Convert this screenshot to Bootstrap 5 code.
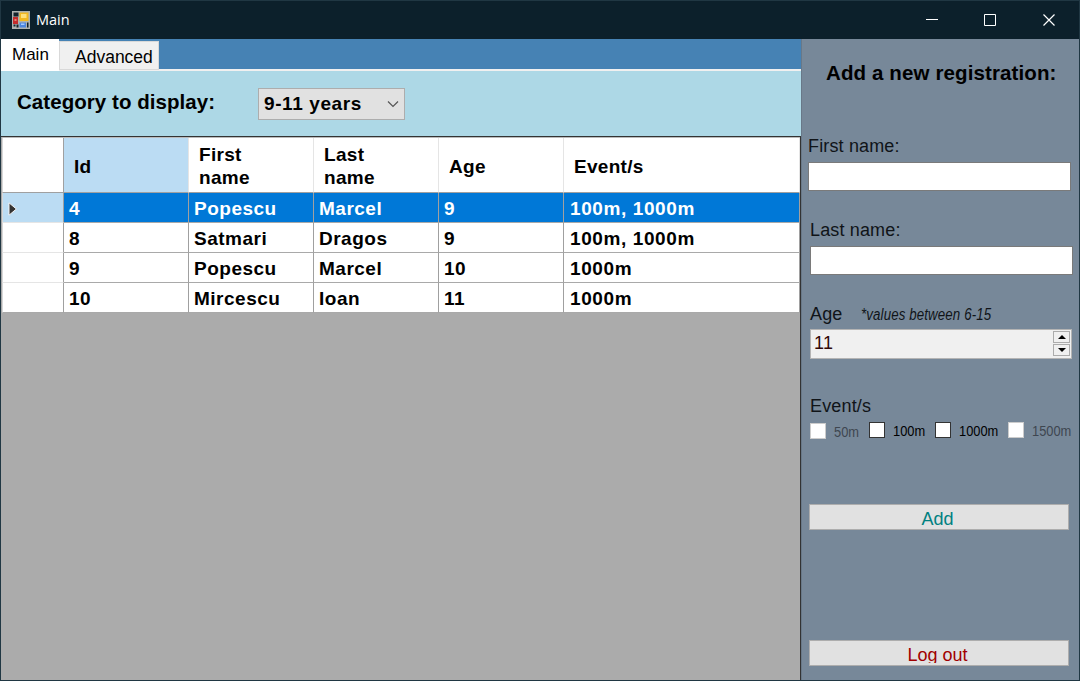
<!DOCTYPE html>
<html lang="en">
<head>
<meta charset="utf-8">
<title>Main</title>
<link href="https://cdn.jsdelivr.net/npm/bootstrap@5.3.0/dist/css/bootstrap.min.css" rel="stylesheet">
<style>
body{font-family:"Liberation Sans",Arial,sans-serif;color:#000;line-height:1.15}
.window{width:1080px;height:681px;border:1px solid #203743;background:#789}
.titlebar{height:38px;background:#0c202b;color:#fff;font:15px "Open Sans","Noto Sans",sans-serif;padding-left:11px}
.titlebar .caption{margin:-2px auto 0 6px;font-size:14.5px}
.winbtn{width:58.5px;position:relative;left:-1px}
.pane{width:800px;background:#ababab}
.tabs{height:32px;background:#4682b4;border-bottom:2px solid #f0f0f0}
.tab-on{width:58px;height:32px;background:#fff;font-size:17px;padding:6px 0 0 11px}
.tab-off{width:100px;height:29px;margin-top:2px;background:#f0f0f0;border:1px solid #d9d9d9;font-size:17.5px;padding:5px 0 0 15px}
.filter{height:65px;background:#add8e6;padding-left:16px}
.filter-label{font-size:20.5px;font-weight:700;letter-spacing:.05px;width:241px;margin-top:-4px}
.combo{width:147px;height:32px;background:#e1e1e1;border:1px solid #adadad;padding:1px 5px 0 5px;font-size:19px;font-weight:700;letter-spacing:.6px}
.gridview{border:solid #333;border-width:1px 1px 0 0;height:544px;padding-left:1px}
.records{table-layout:fixed;width:798px;border-collapse:separate;border-spacing:0;font-size:19px;font-weight:700;letter-spacing:.5px;background:#fff;border-top:1px solid #bbb}
.records th{height:55px;border-right:1px solid #e5e5e5;border-bottom:1px solid #a0a0a0;padding:2px 9px 0 10px;line-height:23px;vertical-align:middle;letter-spacing:.3px}
.records td{height:30px;border-right:1px solid #a0a0a0;border-bottom:1px solid #a9a9a9;padding:2px 0 0 5px;line-height:26px;white-space:nowrap}
.records td:last-child{padding-left:6px;letter-spacing:.6px}
.records tr>:first-child{border-left:1px solid #d8d8d8;border-right-color:#a0a0a0}
.records td:first-child{border-bottom-color:#e5e5e5;padding-left:5px}
.records tr:last-child td:first-child{border-bottom-color:#a9a9a9}
.records .hot,.records .current td:first-child{background:#bbdcf3}
.records .current td{background:#0078d7;color:#fff}
.side{width:278px;border-left:1px solid #687888;padding-left:6px}
.side-title{font-size:20.5px;font-weight:700;letter-spacing:.12px;margin:21px 0 0 18px;height:76px}
.lbl{font-size:18px;height:26px;color:#101418;letter-spacing:.15px}
.field{width:263px;height:29px;background:#fff;border:1px solid #7a7a7a}
.inset{margin-left:2px}
.last-row{margin:29px 0 0 2px}
.age-row{margin:29px 0 0 2px;height:25px}
.spin{width:262px;height:30px;background:#f0f0f0;border:1px solid #b4b4b4;font-size:18px;letter-spacing:.4px;color:#300808;padding:0 1px 0 3px}
.spin-val{padding-top:3px}
.spin-col{gap:1px;padding-top:1px}
.spin-btn{width:17px;height:12px;background:#f0f0f0;border:1px solid #acacac}
.narrow{display:inline-block;transform:scaleX(.83);transform-origin:0 0;white-space:nowrap}
.hint{font-size:16px;font-style:italic;margin:2px 0 0 19px}
.event-row{margin:37px 0 0 2px;height:26px}
.opts{padding-left:2px;height:82px;font-size:15.5px}
.opts label{gap:8px;height:18px;flex:none}
.box{flex:none;width:16px;height:16px;background:#fff;border:1px solid #333}
.off .box{border-color:#ccc}
.off{color:#3e4650}
.o1{width:59px;padding-top:1px}
.o2{width:66px}
.o3{width:73px}
.o4{width:60px}
.act{margin-left:1px;width:260px;height:26px;background:#e1e1e1;border:1px solid #adadad;font-size:18px;line-height:28px;text-align:center;padding-right:3px}
.add{color:#008080}
.out{color:#a00000;margin-top:110px}
.out span{display:block;height:22px;overflow:hidden}
</style>
</head>
<body>
<div class="window d-flex flex-column overflow-hidden">
  <header class="titlebar d-flex align-items-center flex-shrink-0">
    <svg width="18" height="18" viewBox="0 0 18 18"><path fill="#aeb2b0" d="M0 0h18v18H0z"/><path fill="#14232c" d="M1.500 1.500h5v4h-5zM1.500 13.500h2v2h-2zM4.500 13.500h2v3h-2zM15 11.500h1.500v5H15z"/><path fill="#c52b2b" d="M1 6h5v7H1z"/><path fill="#e98276" d="M2.500 8h2v2h-2z"/><path fill="#f3b91e" d="M7.500 1.500h9v8.500h-9z"/><path fill="#ffe17a" d="M9 3h5.500v4H9z"/><path fill="#4d86df" d="M7.500 11.500h6.500v5H7.500z"/><path fill="#a5caff" d="M9 12.500h3.500V14H9z"/></svg>
    <span class="caption">Main</span>
    <span class="winbtn d-flex justify-content-center"><svg width="14" height="14" fill="none" stroke="#fff"><path d="M1 6.500h12"/></svg></span>
    <span class="winbtn d-flex justify-content-center"><svg width="14" height="14" fill="none" stroke="#fff"><path d="M1.500 1.500h11v11h-11z"/></svg></span>
    <span class="winbtn d-flex justify-content-center"><svg width="14" height="14" fill="none" stroke="#fff" stroke-width="1.200"><path d="M1.500 1.500l11 11M12.500 1.500l-11 11"/></svg></span>
  </header>
  <div class="d-flex flex-grow-1">
    <main class="pane">
      <nav class="tabs d-flex"><div class="tab-on">Main</div><div class="tab-off">Advanced</div></nav>
      <section class="filter d-flex align-items-center">
        <div class="filter-label">Category to display:</div>
        <div class="combo d-flex align-items-center justify-content-between"><span>9-11 years</span><svg width="12" height="8" fill="none" stroke="#555" stroke-width="1.200"><path d="M1 1.500l5 5 5-5"/></svg></div>
      </section>
      <section class="gridview">
        <table class="records">
          <colgroup><col style="width:62px"><col style="width:125px"><col style="width:125px"><col style="width:125px"><col style="width:125px"><col></colgroup>
          <thead><tr><th></th><th class="hot">Id</th><th>First<br>name</th><th>Last<br>name</th><th>Age</th><th>Event/s</th></tr></thead>
          <tbody>
            <tr class="current"><td><svg class="d-block" width="9" height="14" viewBox="0 0 9 14"><path fill="#333" stroke="#f4f4f4" d="M1 .8v12.400L8.400 7z"/></svg></td><td>4</td><td>Popescu</td><td>Marcel</td><td>9</td><td>100m, 1000m</td></tr>
            <tr><td></td><td>8</td><td>Satmari</td><td>Dragos</td><td>9</td><td>100m, 1000m</td></tr>
            <tr><td></td><td>9</td><td>Popescu</td><td>Marcel</td><td>10</td><td>1000m</td></tr>
            <tr><td></td><td>10</td><td>Mircescu</td><td>Ioan</td><td>11</td><td>1000m</td></tr>
          </tbody>
        </table>
      </section>
    </main>
    <aside class="side">
      <h1 class="side-title lh-sm">Add a new registration:</h1>
      <div class="lbl">First name:</div>
      <div class="field"></div>
      <div class="lbl last-row">Last name:</div>
      <div class="field inset"></div>
      <div class="lbl age-row d-flex">Age<span class="hint narrow">*values between 6-15</span></div>
      <div class="spin inset d-flex justify-content-between"><span class="spin-val">11</span>
        <div class="d-flex flex-column spin-col"><span class="spin-btn d-flex align-items-center justify-content-center"><svg width="8" height="4"><path d="M0 4h8L4 0z"/></svg></span><span class="spin-btn d-flex align-items-center justify-content-center"><svg width="8" height="4"><path d="M0 0h8L4 4z"/></svg></span></div>
      </div>
      <div class="lbl event-row">Event/s</div>
      <div class="opts d-flex">
        <label class="off d-flex o1"><span class="box"></span><span class="narrow">50m</span></label>
        <label class="d-flex o2"><span class="box"></span><span class="narrow">100m</span></label>
        <label class="d-flex o3"><span class="box"></span><span class="narrow">1000m</span></label>
        <label class="off d-flex o4"><span class="box"></span><span class="narrow">1500m</span></label>
      </div>
      <div class="act add">Add</div>
      <div class="act out"><span>Log out</span></div>
    </aside>
  </div>
</div>
<script src="https://cdn.jsdelivr.net/npm/bootstrap@5.3.0/dist/js/bootstrap.bundle.min.js"></script>
</body>
</html>
